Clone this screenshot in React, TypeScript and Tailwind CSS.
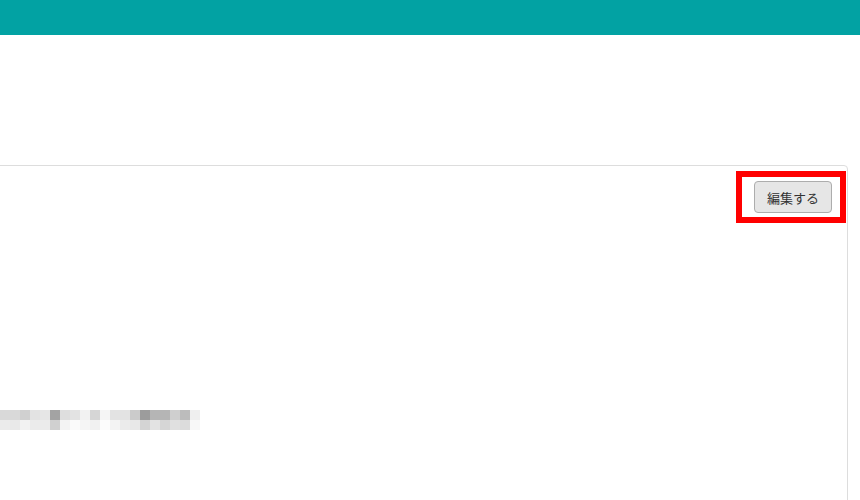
const row1 = [
  'bg-[#d9d9d9]', 'bg-[#d9d9d9]', 'bg-[#d0d0d0]', 'bg-[#e3e3e3]', 'bg-[#e6e6e6]',
  'bg-[#a3a3a3]', 'bg-[#dedede]', 'bg-[#e3e3e3]', 'bg-[#f2f2f2]', 'bg-[#d6d6d6]',
  'bg-[#f5f5f5]', 'bg-[#e3e3e3]', 'bg-[#e3e3e3]', 'bg-[#cbcbcb]', 'bg-[#9c9c9c]',
  'bg-[#b5b5b5]', 'bg-[#b5b5b5]', 'bg-[#cfcfcf]', 'bg-[#bcbcbc]', 'bg-[#efefef]',
];
const row2 = [
  'bg-[#ebebeb]', 'bg-[#e9e9e9]', 'bg-[#f2f2f2]', 'bg-[#ebebeb]', 'bg-[#ebebeb]',
  'bg-[#d0d0d0]', 'bg-[#f3f3f3]', 'bg-[#fafafa]', 'bg-[#f5f5f5]', 'bg-[#f1f1f1]',
  'bg-[#fcfcfc]', 'bg-[#f3f3f3]', 'bg-[#ebebeb]', 'bg-[#e8e8e8]', 'bg-[#d4d4d4]',
  'bg-[#e3e3e3]', 'bg-[#d6d6d6]', 'bg-[#e0e0e0]', 'bg-[#dcdcdc]', 'bg-[#f8f8f8]',
];

export default function App() {
  return (
    <div className="w-[860px] h-[500px] overflow-hidden bg-white font-['Noto_Sans_CJK_JP','Noto_Sans',sans-serif]">
      {/* Top bar */}
      <div className="h-[35px] bg-[#02a2a3]" />

      {/* Panel */}
      <div className="mt-[130px] ml-[-10px] mr-[12px] h-[400px] border border-[#dddddd] rounded-tr-[4px] pt-[15px] pr-[15px]">
        <div className="flex justify-end">
          <div className="relative">
            <button className="w-[78px] h-[32px] rounded-[4px] border border-[#adadad] bg-[#e6e6e6] text-[13px] text-[#333333] leading-none">
              編集する
            </button>
            {/* highlight box */}
            <div className="absolute left-[-18px] top-[-10px] right-[-14px] bottom-[-10px] border-[6px] border-[#ff0000]" />
          </div>
        </div>

        {/* Blurred text */}
        <div className="mt-[197px] ml-[9px] flex flex-col">
          <div className="flex">
            {row1.map((c, i) => (
              <div key={i} className={`w-[10px] h-[10px] ${c}`} />
            ))}
          </div>
          <div className="flex">
            {row2.map((c, i) => (
              <div key={i} className={`w-[10px] h-[10px] ${c}`} />
            ))}
          </div>
        </div>
      </div>
    </div>
  );
}
